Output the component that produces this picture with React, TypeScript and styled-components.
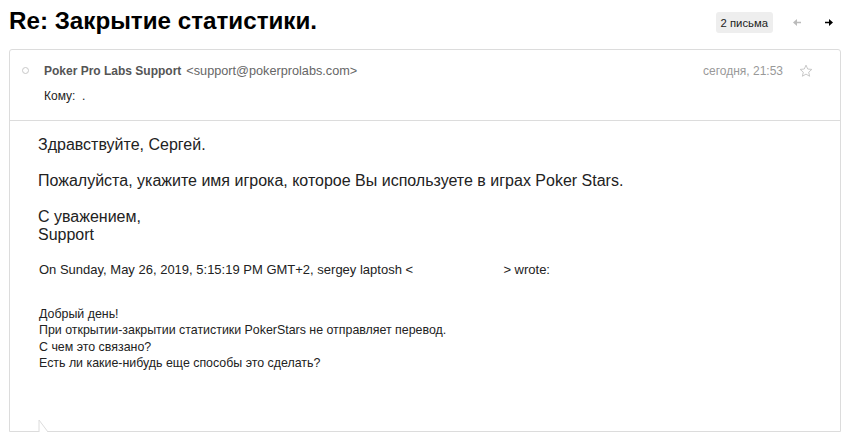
import React from "react";
import styled, { createGlobalStyle } from "styled-components";

const Global = createGlobalStyle`
  html, body { margin: 0; padding: 0; background: #fff; }
  body { font-family: "Liberation Sans", Arial, sans-serif; color: #222; }
  * { box-sizing: border-box; }
`;

const Page = styled.div`
  width: 845px;
  height: 433px;
  overflow: hidden;
  display: flex;
  flex-direction: column;
`;

const TopBar = styled.div`
  height: 49px;
  padding: 7px 12px 0 9px;
  display: flex;
  align-items: flex-start;
`;

const Title = styled.h1`
  margin: 0;
  font-size: 24.2px;
  line-height: 28px;
  font-weight: bold;
  color: #000;
  flex: 1;
`;

const Badge = styled.span`
  margin-top: 5px;
  height: 21px;
  padding: 0 5px;
  display: inline-flex;
  align-items: center;
  background: #eee;
  border-radius: 3px;
  font-size: 11.3px;
  color: #222;
`;

const NavArrow = styled.span<{ $active?: boolean }>`
  margin-top: 12px;
  margin-left: ${(p) => (p.$active ? "24px" : "20px")};
  display: inline-flex;
  color: ${(p) => (p.$active ? "#000" : "#bbb")};
`;

const Card = styled.div`
  position: relative;
  margin: 0 4px 0 9px;
  height: 383px;
  border: 1px solid #dcdcdc;
  border-radius: 3px 3px 0 0;
  display: flex;
  flex-direction: column;
`;

const Header = styled.div`
  padding: 13px 27px 17px 12px;
  border-bottom: 1px solid #dcdcdc;
  display: flex;
  flex-direction: column;
  gap: 10px;
`;

const HeaderRow = styled.div`
  display: flex;
  align-items: center;
  height: 15px;
  font-size: 12px;
`;

const Dot = styled.span`
  width: 7px;
  height: 7px;
  border: 1px solid #c8c8c8;
  border-radius: 50%;
  margin-right: 15px;
`;

const Sender = styled.span`
  font-weight: bold;
  color: #555;
  margin-right: 5px;
`;

const Email = styled.span`
  color: #666;
  font-size: 12.7px;
  flex: 1;
`;

const DateText = styled.span`
  color: #999;
  font-size: 12px;
  margin-right: 16px;
`;

const ToLine = styled.span`
  margin-left: 22px;
  color: #222;
  font-size: 12px;
  white-space: pre;
`;

const Body = styled.div`
  padding: 15px 0 0 28px;
  color: #222;
`;

const Para = styled.p`
  margin: 0 0 18px;
  font-size: 16px;
  line-height: 18px;
`;

const Attribution = styled.p`
  margin: 1px 0 27px 1px;
  font-size: 13px;
  line-height: 16px;
  white-space: pre;
`;

const Quote = styled.div`
  margin-left: 1px;
  font-size: 12.4px;
  line-height: 16.4px;
  padding-top: 1px;
`;

const Tail = styled.svg`
  position: absolute;
  left: 28px;
  bottom: -1px;
`;

const ArrowIcon = ({ dir }: { dir: "left" | "right" }) => (
  <svg width="8" height="7" viewBox="0 0 8 7">
    {dir === "left" ? (
      <path d="M0 3.5 L4 0 L4 2.7 L8 2.7 L8 4.3 L4 4.3 L4 7 Z" fill="currentColor" />
    ) : (
      <path d="M8 3.5 L4 0 L4 2.7 L0 2.7 L0 4.3 L4 4.3 L4 7 Z" fill="currentColor" />
    )}
  </svg>
);

const StarIcon = () => (
  <svg width="14" height="14" viewBox="0 0 24 24">
    <polygon
      points="12,2 14.9,8.6 22,9.3 16.6,14 18.2,21 12,17.3 5.8,21 7.4,14 2,9.3 9.1,8.6"
      fill="none"
      stroke="#c4c4c4"
      strokeWidth="1.6"
      strokeLinejoin="round"
    />
  </svg>
);

export default function App() {
  return (
    <>
      <Global />
      <Page>
        <TopBar>
          <Title>Re: Закрытие статистики.</Title>
          <Badge>2 письма</Badge>
          <NavArrow>
            <ArrowIcon dir="left" />
          </NavArrow>
          <NavArrow $active>
            <ArrowIcon dir="right" />
          </NavArrow>
        </TopBar>
        <Card>
          <Header>
            <HeaderRow>
              <Dot />
              <Sender>Poker Pro Labs Support</Sender>
              <Email>&lt;support@pokerprolabs.com&gt;</Email>
              <DateText>сегодня, 21:53</DateText>
              <StarIcon />
            </HeaderRow>
            <HeaderRow>
              <ToLine>{"Кому:  ."}</ToLine>
            </HeaderRow>
          </Header>
          <Body>
            <Para>Здравствуйте, Сергей.</Para>
            <Para>Пожалуйста, укажите имя игрока, которое Вы используете в играх Poker Stars.</Para>
            <Para>
              С уважением,
              <br />
              Support
            </Para>
            <Attribution>
              {"On Sunday, May 26, 2019, 5:15:19 PM GMT+2, sergey laptosh <                         > wrote:"}
            </Attribution>
            <Quote>
              Добрый день!
              <br />
              При открытии-закрытии статистики PokerStars не отправляет перевод.
              <br />
              С чем это связано?
              <br />
              Есть ли какие-нибудь еще способы это сделать?
            </Quote>
          </Body>
          <Tail width="14" height="13" viewBox="0 0 14 13">
            <path d="M1 13 L1 1 L10 13" fill="#fff" stroke="#dcdcdc" strokeWidth="1" />
          </Tail>
        </Card>
      </Page>
    </>
  );
}
